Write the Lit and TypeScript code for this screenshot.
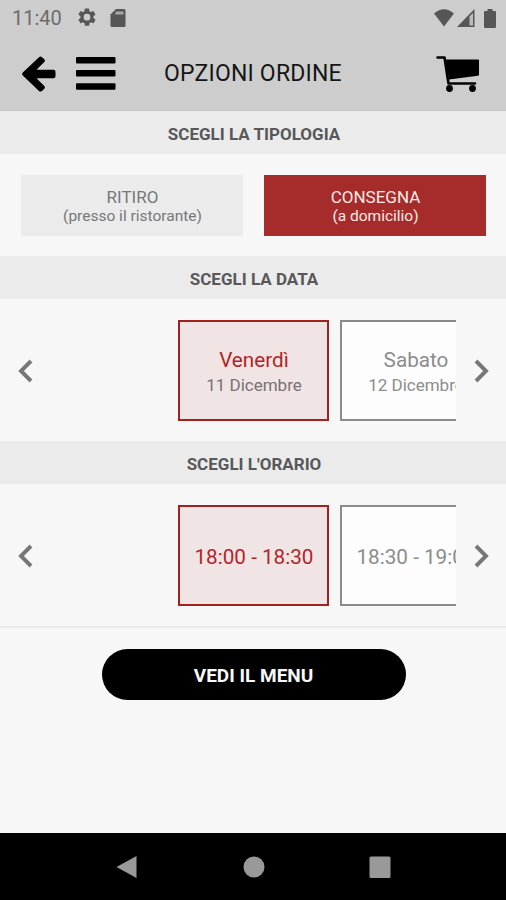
import { LitElement, html, svg, css } from "lit";
import { customElement, property, state } from "lit/decorators.js";
import { classMap } from "lit/directives/class-map.js";

interface Slot {
  title: string;
  detail?: string;
}

@customElement("section-title")
class SectionTitle extends LitElement {
  static styles = css`
    :host {
      display: flex;
      align-items: center;
      justify-content: center;
      height: 43px;
      padding: 2px 0 0 2px;
      box-sizing: border-box;
      background: #ebebeb;
      color: #58585a;
      font-weight: 700;
      font-size: 17px;
      line-height: 20px;
    }
  `;
  render() {
    return html`<slot></slot>`;
  }
}

@customElement("slot-picker")
class SlotPicker extends LitElement {
  @property({ attribute: false }) slots: Slot[] = [];
  @state() private selected = 0;

  static styles = css`
    :host {
      display: flex;
      align-items: center;
      height: 142px;
    }
    .arrow {
      width: 50px;
      height: 40px;
      flex: none;
      padding: 2px 0 0;
      border: 0;
      background: none;
      display: flex;
      align-items: center;
      justify-content: center;
    }
    .arrow svg {
      width: 16px;
      height: 24px;
      fill: none;
      stroke: #777;
      stroke-width: 3.9;
    }
    .track {
      flex: 1;
      display: flex;
      gap: 11px;
      padding-left: 128px;
      overflow: hidden;
    }
    .card {
      flex: none;
      box-sizing: border-box;
      width: 151px;
      height: 101px;
      padding: 3px 0 0 1px;
      border: 2px solid #8b8b8b;
      background: #fdfdfd;
      color: #8c8c8c;
      display: flex;
      flex-direction: column;
      align-items: center;
      justify-content: center;
      white-space: nowrap;
    }
    .card.dated {
      padding-top: 5px;
    }
    .title {
      font-size: 20.7px;
      line-height: 26px;
    }
    .detail {
      font-size: 17px;
      line-height: 25px;
    }
    .card.on {
      border-color: #a32020;
      background: #f0e4e4;
      color: #b32428;
    }
    .card.on .detail {
      color: #777274;
    }
  `;

  render() {
    return html`
      <button class="arrow" aria-label="Precedente">
        <svg viewBox="0 0 16 24"><path d="M14 2 L4 12 L14 22" /></svg>
      </button>
      <div class="track">
        ${this.slots.map(
          (s, i) => html`<div
            class=${classMap({ card: true, dated: !!s.detail, on: i === this.selected })}
            @click=${() => (this.selected = i)}
          >
            <span class="title">${s.title}</span>
            ${s.detail ? html`<span class="detail">${s.detail}</span>` : ""}
          </div>`
        )}
      </div>
      <button class="arrow" aria-label="Successivo">
        <svg viewBox="0 0 16 24"><path d="M3 2 L13 12 L3 22" /></svg>
      </button>
    `;
  }
}

const gear = svg`<path fill-rule="evenodd" d="M19.4 13a7.500 7.500 0 0 0 0-2l2.100-1.600a.5.5 0 0 0 .1-.7l-2-3.400a.5.5 0 0 0-.6-.2l-2.500 1a7.300 7.300 0 0 0-1.700-1l-.4-2.600a.5.5 0 0 0-.5-.5h-4a.5.5 0 0 0-.5.500l-.4 2.600a7.700 7.700 0 0 0-1.700 1l-2.500-1a.5.5 0 0 0-.6.200l-2 3.400a.5.5 0 0 0 .1.700L4.500 11a8 8 0 0 0 0 2l-2.100 1.600a.5.5 0 0 0-.1.700l2 3.400c.1.200.4.300.6.200l2.500-1c.5.400 1.100.8 1.700 1l.4 2.600c0 .3.200.5.500.500h4c.3 0 .5-.2.5-.5l.4-2.600a7.300 7.300 0 0 0 1.700-1l2.500 1c.2.100.5 0 .6-.2l2-3.400a.5.500 0 0 0-.1-.7zM12 15.900a3.900 3.900 0 1 1 0-7.800 3.900 3.900 0 0 1 0 7.800z"/>`;

@customElement("app-root")
class AppRoot extends LitElement {
  static styles = css`
    :host {
      display: flex;
      flex-direction: column;
      height: 900px;
      background: #f7f7f7;
      font-family: Roboto, "Liberation Sans", sans-serif;
      overflow: hidden;
    }
    svg {
      display: block;
      flex: none;
    }
    .top {
      height: 111px;
      flex: none;
      background: #cdcdcd;
      box-sizing: border-box;
      border-bottom: 1px solid #c4c4c4;
    }
    .status {
      height: 36px;
      display: flex;
      align-items: center;
      padding: 0 10px 0 12px;
      color: #6c6c6c;
      fill: #565656;
    }
    .clock {
      width: 65px;
      font-size: 20px;
      line-height: 24px;
    }
    .gap {
      flex: 1;
    }
    .sd {
      margin-left: 13px;
    }
    .cell {
      margin: 0 9px 0 3px;
    }
    .faint {
      fill: #a8a8a8;
    }
    .bar {
      display: flex;
      align-items: center;
      height: 74px;
      padding: 1px 26px 0 22px;
      box-sizing: border-box;
    }
    .burger {
      margin-left: 20px;
    }
    .heading {
      margin: 1px 0 0 48px;
      flex: 1;
      font-size: 23px;
      font-weight: 400;
      line-height: 28px;
      letter-spacing: 0.2px;
      color: #161616;
    }
    .types {
      display: grid;
      grid-template-columns: 222px 222px;
      gap: 21px;
      padding: 20.500px 0 20.500px 21px;
      height: 61px;
    }
    .type {
      display: flex;
      flex-direction: column;
      align-items: center;
      padding-top: 12px;
      background: #ebebeb;
      color: #77777a;
      font-size: 17px;
      line-height: 20px;
    }
    .type small {
      font-size: 15.500px;
      line-height: 19px;
    }
    .type span,
    .type small {
      padding-left: 1px;
    }
    .type.on {
      background: #a52c2a;
      color: #fbe9e8;
    }
    .foot {
      flex: 1;
      border-top: 2px solid #e9e9e9;
      display: flex;
      justify-content: center;
      align-items: flex-start;
      padding: 21px 0 0 1px;
    }
    .cta {
      width: 304px;
      height: 51px;
      padding: 2px 0 0;
      border: 0;
      border-radius: 26px;
      background: #000;
      color: #f8f8f8;
      font: 700 19px/24px Roboto, "Liberation Sans", sans-serif;
    }
    .nav {
      height: 67px;
      flex: none;
      background: #000;
      fill: #999;
      display: flex;
      justify-content: center;
      align-items: center;
      gap: 102.500px;
      padding-left: 1px;
    }
  `;

  private days: Slot[] = [
    { title: "Venerdì", detail: "11 Dicembre" },
    { title: "Sabato", detail: "12 Dicembre" },
  ];
  private times: Slot[] = [{ title: "18:00 - 18:30" }, { title: "18:30 - 19:00" }];

  render() {
    return html`
      <div class="top">
        <div class="status">
          <span class="clock">11:40</span>
          <svg width="20" height="20" viewBox="0.500 1.500 23 23">${gear}</svg>
          <svg class="sd" width="16" height="18" viewBox="0 0 16 18">
            <path d="M6 0H14Q15.500 0 15.500 1.500V16.500Q15.500 18 14 18H2Q.5 18 .5 16.500V5.500Z" />
            <path class="faint" d="M6 2.500H13.500V5.500H5Z" />
          </svg>
          <span class="gap"></span>
          <svg width="20" height="18" viewBox="0 0 20 18"><path d="M0 4.500Q10-4 20 4.500L10 17.500Z" /></svg>
          <svg class="cell" width="18" height="18" viewBox="0 0 18 18">
            <path d="M0 18L17.500 0V18Z" />
            <path d="M12.500 7.500V16.500H16V4Z" fill="#bdbdbd" />
          </svg>
          <svg width="12" height="19" viewBox="0 0 12 19">
            <path d="M3.500 0h5v2H11q1 0 1 1v15q0 1-1 1H1q-1 0-1-1V3q0-1 1-1h2.500Z" />
          </svg>
        </div>
        <div class="bar">
          <svg width="34" height="38" viewBox="0 0 34 38">
            <path d="M17 2.200Q18.500 1 20 2.200L22.300 4.300Q23.500 5.700 22.300 7L14.500 14.800H31.500Q33.500 14.800 33.500 16.800V21.200Q33.500 23.200 31.500 23.200H14.500L22.300 31Q23.500 32.300 22.300 33.700L20 35.900Q18.500 37 17 35.900L.8 20.600Q-.5 19 .8 17.500Z" />
          </svg>
          <svg class="burger" width="40" height="34" viewBox="0 0 40 34">
            <rect y="0" width="39.500" height="6.500" rx="1" />
            <rect y="13" width="39.500" height="6.500" rx="1" />
            <rect y="26.200" width="39.500" height="6.500" rx="1" />
          </svg>
          <h1 class="heading">OPZIONI ORDINE</h1>
          <svg width="44" height="38" viewBox="0 0 44 38">
            <path d="M1.500 2.500H8.500L12.500 28.500H39" fill="none" stroke="#000" stroke-width="2.600" stroke-linecap="round" stroke-linejoin="round" />
            <path d="M9 4.500H42Q43 4.500 43 5.500V19.500Q43 20.500 42 20.700L13 24.500Z" />
            <circle cx="13.500" cy="33.500" r="3.400" />
            <circle cx="36.500" cy="33.500" r="3.400" />
          </svg>
        </div>
      </div>
      <section-title>SCEGLI LA TIPOLOGIA</section-title>
      <div class="types">
        <div class="type"><span>RITIRO</span><small>(presso il ristorante)</small></div>
        <div class="type on"><span>CONSEGNA</span><small>(a domicilio)</small></div>
      </div>
      <section-title>SCEGLI LA DATA</section-title>
      <slot-picker .slots=${this.days}></slot-picker>
      <section-title>SCEGLI L'ORARIO</section-title>
      <slot-picker .slots=${this.times}></slot-picker>
      <div class="foot"><button class="cta">VEDI IL MENU</button></div>
      <div class="nav">
        <svg width="24" height="24" viewBox="0 0 24 24"><path d="M1.500 12L21.500 1V23Z" /></svg>
        <svg width="24" height="24" viewBox="0 0 24 24"><circle cx="12" cy="12" r="10.500" /></svg>
        <svg width="24" height="24" viewBox="0 0 24 24"><rect x="1.500" y="1.500" width="21" height="21.500" rx="1.500" /></svg>
      </div>
    `;
  }
}
